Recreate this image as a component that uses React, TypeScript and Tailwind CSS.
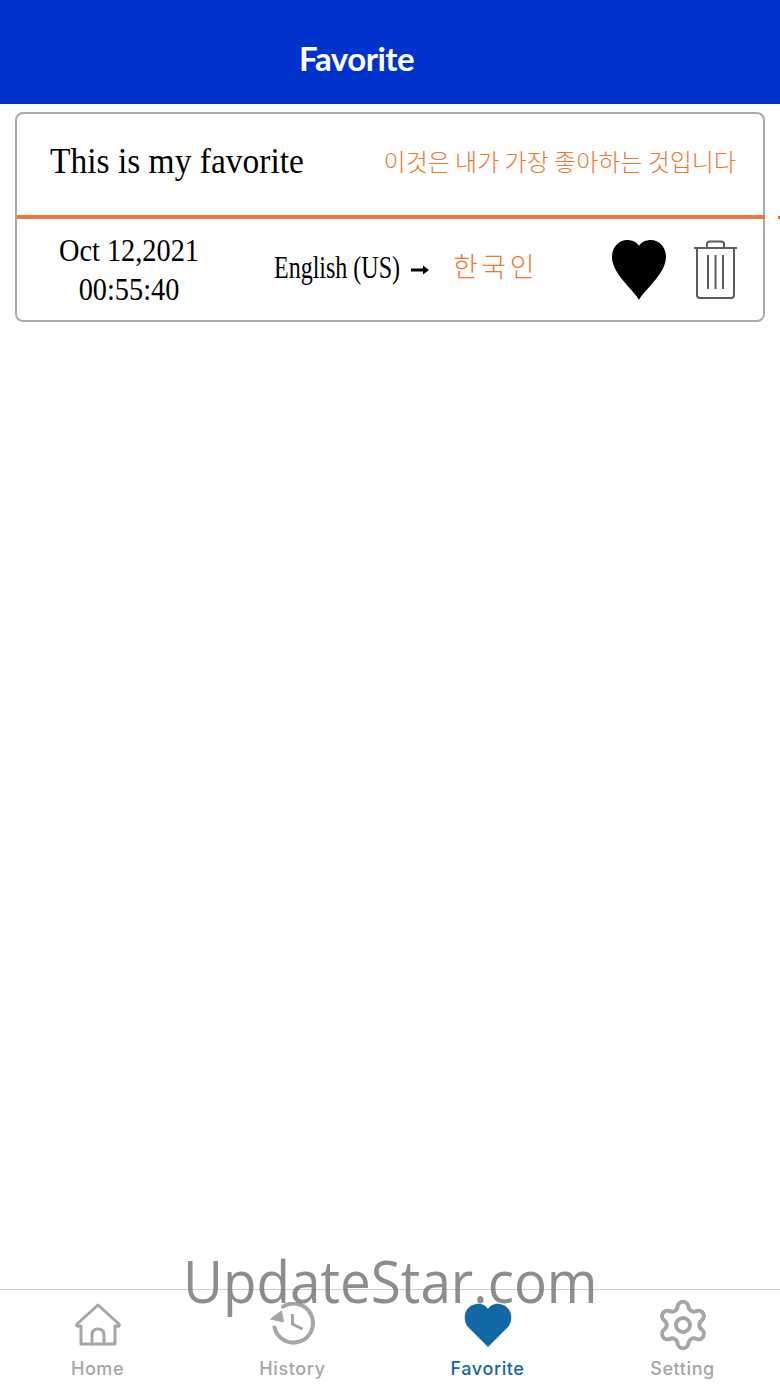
import React from 'react';
import { Settings } from 'lucide-react';

const HomeIcon = () => (
  <svg width="46" height="44" viewBox="0 0 46 44" fill="none" stroke="currentColor" strokeWidth="3" strokeLinejoin="round" strokeLinecap="round">
    <path d="M23 2 L44 21 Q45 24 42 23 H40 V41 H6 V23 H4 Q1 24 2 21 Z" />
    <path d="M17 41 V32 Q17 26 23 26 Q29 26 29 32 V41" />
  </svg>
);

const HistoryIcon = () => (
  <svg width="48" height="46" viewBox="0 0 48 46" fill="none" stroke="currentColor" strokeWidth="4">
    <path d="M14 4.6 A19.5 19.5 0 1 1 5.5 25.5" strokeLinecap="round" />
    <path d="M1.5 17 L12.5 9 L14.5 20 Z" fill="currentColor" stroke="currentColor" strokeWidth="1" strokeLinejoin="round" />
    <path d="M23.5 12 V22 L33.5 27" strokeWidth="3" />
  </svg>
);

const HeartIcon = ({ className }: { className: string }) => (
  <svg className={className} viewBox="0 0 54 60" fill="currentColor">
    <path d="M27 60 C23 51 0 34 0 17 C0 7 7 0 15 0 C20 0 25 2 27 6 C29 2 34 0 39 0 C47 0 54 7 54 17 C54 34 31 51 27 60 Z" />
  </svg>
);

const NavHeartIcon = () => (
  <svg width="48" height="44" viewBox="0 0 48 44" fill="currentColor">
    <path d="M24 44 L4 24 C-2 17 0 3 12 1 C18 0 22 3 24 6 C26 3 30 0 36 1 C48 3 50 17 44 24 Z" />
  </svg>
);

const TrashIcon = () => (
  <svg width="44" height="60" viewBox="0 0 44 60" fill="none" stroke="#5c5c5c" strokeWidth="2">
    <path d="M0 8 H43" />
    <path d="M13 8 V4 Q13 1.5 15.5 1.5 H27.5 Q30 1.5 30 4 V8" />
    <path d="M3 8 V55 Q3 58 6 58 H37 Q40 58 40 55 V8" />
    <path d="M14 15 V49 M21.5 15 V49 M29 15 V49" />
  </svg>
);

const ArrowIcon = () => (
  <svg width="18" height="12" viewBox="0 0 18 12" fill="black">
    <path d="M0 4.4 H12 V1.5 L18 6 L12 10.5 V7.6 H0 Z" />
  </svg>
);

const tabs = [
  { label: 'Home', icon: <HomeIcon />, active: false },
  { label: 'History', icon: <HistoryIcon />, active: false },
  { label: 'Favorite', icon: <NavHeartIcon />, active: true },
  { label: 'Setting', icon: <Settings size={56} strokeWidth={1.7} />, active: false },
];

export default function App() {
  return (
    <div className="relative flex h-[1387px] w-[780px] flex-col overflow-hidden bg-white font-['Liberation_Serif',serif]">
      <header className="flex h-[104px] shrink-0 items-center bg-[#0033cc] pl-[299px]">
        <h1 className="pt-[12px] font-['Lato',sans-serif] text-[33px] font-bold leading-none tracking-[-0.5px] text-white">Favorite</h1>
      </header>

      <main className="flex-1 px-[15px] pt-2">
        <div className="relative rounded-lg border-2 border-[#ababab]">
          <div className="flex h-[101px] items-center justify-between pl-[33px] pr-[27px]">
            <span className="w-[254px] origin-left scale-x-[0.93] whitespace-nowrap pb-[8px] text-[36px] text-black">This is my favorite</span>
            <span className="pb-[7px] font-['Noto_Sans_CJK_KR',sans-serif] text-[24px] font-light text-[#ee7733]">이것은 내가 가장 좋아하는 것입니다</span>
          </div>
          <div className="-mr-[2px] h-1 bg-[#ee7733]" />
          <div className="flex h-[101px] items-center">
            <div className="w-[224px] text-center text-[32px] leading-[39px] text-black">
              <div className="scale-x-[0.885] whitespace-nowrap">Oct 12,2021</div>
              <div className="scale-x-[0.885] whitespace-nowrap">00:55:40</div>
            </div>
            <div className="ml-[33px] flex items-center">
              <span className="w-[126px] origin-left scale-x-[0.75] whitespace-nowrap pb-[6px] text-[32px] text-black">English (US)</span>
              <span className="ml-[11px] pt-[1px]"><ArrowIcon /></span>
            </div>
            <span className="ml-[24px] pb-[7px] font-['Noto_Sans_CJK_KR',sans-serif] text-[27px] font-light tracking-[3.5px] text-[#ee7733]">한국인</span>
            <div className="ml-auto flex items-center gap-[28px] pr-[25px]">
              <HeartIcon className="h-[60px] w-[54px] text-black" />
              <TrashIcon />
            </div>
          </div>
        </div>
      </main>

      <nav className="flex h-[98px] shrink-0 border-t border-[#cfcfcf] bg-white">
        {tabs.map((tab) => (
          <div
            key={tab.label}
            className={`flex w-[195px] flex-col items-center pt-[11px] ${tab.active ? 'text-[#1268a4]' : 'text-[#a6a6a6]'}`}
          >
            <div className="flex h-[48px] items-center justify-center">{tab.icon}</div>
            <span className="mt-[9px] font-['Inter',sans-serif] text-[18px] font-medium leading-[22px] tracking-[0.6px]">{tab.label}</span>
          </div>
        ))}
      </nav>

      <div className="absolute left-[183px] top-[1241px] origin-left scale-x-[0.945] font-['Open_Sans',sans-serif] text-[58px] leading-[80px] text-[#707070]/80">UpdateStar.com</div>
      <div className="absolute left-[778px] top-[216px] h-[3px] w-[2px] bg-[#ee7733]" />
    </div>
  );
}
